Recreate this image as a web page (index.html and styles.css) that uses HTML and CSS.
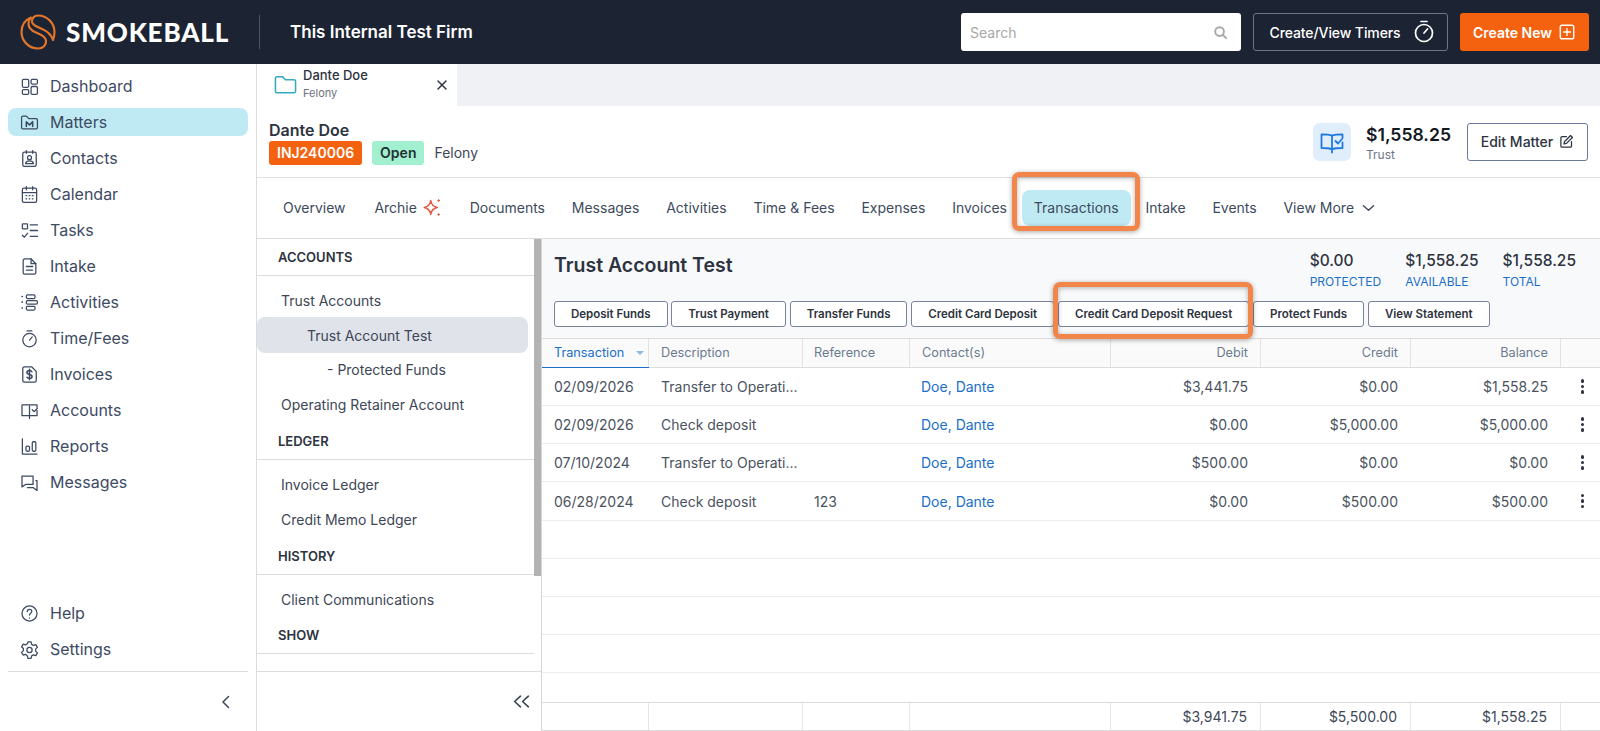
FILE: index.html
```html
<!DOCTYPE html>
<html lang="en">
<head>
<meta charset="utf-8">
<title>Smokeball</title>
<link rel="stylesheet" href="styles.css">
</head>
<body>
<div class="app">
  <header class="topbar">
    <div class="brand">
      <svg class="logo" viewBox="0 0 36 36" fill="none" stroke="#e2752a" stroke-width="2.200" stroke-linejoin="round" stroke-linecap="round">
        <path d="M11 3.500C5 6 1.500 11.500 1.500 18 1.500 27 9 34.500 18 34.500c5 0 8.500-3.500 8-8-.5-4-5-6-10-8-5-2-7.500-5.500-7.500-9 0-2.500 1-4.500 2.500-6z"/>
        <path d="M33 26c1-2.500 1.500-5 1.500-8C34.500 9 27 1.500 18 1.500c-4 0-6.500 3-6 6.500.5 3 4 4.500 9 6.500 6 2.500 10.500 6.500 12 11.500z"/>
      </svg>
      <span class="wordmark">SMOKEBALL</span>
    </div>
    <div class="firm">This Internal Test Firm</div>
    <div class="top-actions">
      <div class="search">
        <span>Search</span>
        <svg viewBox="0 0 24 24" fill="none" stroke="#a8a8a8" stroke-width="3" stroke-linecap="round"><circle cx="10.500" cy="10.500" r="7"/><path d="M16 16l5 5"/></svg>
      </div>
      <button class="btn-timer">Create/View Timers
        <svg viewBox="0 0 24 24" fill="none" stroke="#fff" stroke-width="1.700" stroke-linecap="round"><circle cx="12" cy="14" r="8.500"/><path d="M9 2.500h6M12 14l3.500-4"/></svg>
      </button>
      <button class="btn-create">Create New
        <svg viewBox="0 0 24 24" fill="none" stroke="#fff" stroke-width="1.800" stroke-linecap="round"><rect x="3" y="3" width="18" height="18" rx="2.500"/><path d="M12 7.500v9M7.500 12h9"/></svg>
      </button>
    </div>
  </header>

  <div class="body">
    <nav class="sidebar">
      <div class="nav-main">
        <a class="nav-item"><svg viewBox="0 0 24 24"><rect x="3" y="3" width="8" height="10" rx="1.500"/><rect x="14" y="3" width="8" height="6" rx="1.500"/><rect x="3" y="16" width="8" height="6" rx="1.500"/><rect x="14" y="12" width="8" height="10" rx="1.500"/></svg>Dashboard</a>
        <a class="nav-item active"><svg viewBox="0 0 24 24"><path d="M2 5.500A1.500 1.500 0 0 1 3.500 4H8l3 3h9.500A1.500 1.500 0 0 1 22 8.500v10a1.500 1.500 0 0 1-1.500 1.500h-17A1.500 1.500 0 0 1 2 18.500z"/><path class="thick" d="M8 17v-6l4 4 4-4v6"/></svg>Matters</a>
        <a class="nav-item"><svg viewBox="0 0 24 24"><rect x="3.500" y="4" width="17" height="18" rx="2"/><path d="M8 2v3.500M16 2v3.500"/><circle cx="12" cy="11" r="2.500"/><path d="M7 18.500c.5-2.500 2.500-3.500 5-3.500s4.500 1 5 3.500z"/></svg>Contacts</a>
        <a class="nav-item"><svg viewBox="0 0 24 24"><rect x="3" y="4" width="18" height="18" rx="2"/><path d="M3 9.500h18M8 2v4M16 2v4M7.500 13.500h1M11.500 13.500h1M15.500 13.500h1M7.500 17.500h1M11.500 17.500h1M15.500 17.500h1"/></svg>Calendar</a>
        <a class="nav-item"><svg viewBox="0 0 24 24"><rect x="3" y="3.500" width="6.500" height="6.500" rx="1"/><path d="M13 5h9M13 12h9M13 19.500h9M3 18l2.500 2.500L9.500 15.500"/></svg>Tasks</a>
        <a class="nav-item"><svg viewBox="0 0 24 24"><path d="M14 2.500H6a2 2 0 0 0-2 2v15a2 2 0 0 0 2 2h12a2 2 0 0 0 2-2V8.500z"/><path d="M14 2.500v6h6M8 12h8M8 16.500h8"/></svg>Intake</a>
        <a class="nav-item"><svg viewBox="0 0 24 24"><rect x="8" y="2.500" width="11" height="4.500" rx="1.500"/><rect x="8" y="9.500" width="14" height="4.500" rx="1.500"/><rect x="8" y="17" width="11" height="4.500" rx="1.500"/><path class="thick" d="M2.500 4.500h.5M2.500 11.500h.5M2.500 19h.5"/></svg>Activities</a>
        <a class="nav-item"><svg viewBox="0 0 24 24"><circle cx="12" cy="14" r="8.500"/><path d="M9 2.500h6M12 14l3.500-4"/></svg>Time/Fees</a>
        <a class="nav-item"><svg viewBox="0 0 24 24"><path d="M15 2.500H5.500a2 2 0 0 0-2 2v15a2 2 0 0 0 2 2h13a2 2 0 0 0 2-2V8z"/><path class="thick" d="M15 8.500c-.5-1-1.500-1.500-3-1.500-2 0-3.200 1-3.200 2.500 0 3.500 6.400 1.500 6.400 5 0 1.500-1.200 2.500-3.200 2.500-1.500 0-2.500-.5-3-1.500M12 5.500v13"/></svg>Invoices</a>
        <a class="nav-item"><svg viewBox="0 0 24 24"><path d="M12 6.500V22M12 5H2.500v13.500H12M12 5h9.500v3M12 18.500h9.500V12M15.500 11l2.500 2.500 4-4.500"/></svg>Accounts</a>
        <a class="nav-item"><svg viewBox="0 0 24 24"><path d="M3 2.500v19h18.500"/><rect x="7.500" y="11.500" width="4.500" height="6.500" rx="1.500"/><rect x="15.500" y="6" width="4.500" height="12" rx="1.500"/></svg>Reports</a>
        <a class="nav-item"><svg viewBox="0 0 24 24"><path d="M2.500 4h14v10.500H7l-4.500 3zM20 9.500h1.500V22l-4.500-3.500H9.500"/></svg>Messages</a>
      </div>
      <div class="nav-bottom">
        <a class="nav-item"><svg viewBox="0 0 24 24"><circle cx="12" cy="12" r="9.500"/><path d="M9.200 9.500c0-1.700 1.300-2.700 2.900-2.700s2.800 1 2.800 2.500c0 2.300-2.900 2.300-2.900 4.700M12 17.500v.2"/></svg>Help</a>
        <a class="nav-item"><svg viewBox="0 0 24 24"><path d="M10 2.500h4l.7 3 2.300 1.300 3-.9 2 3.400-2.300 2.200v2.600l2.300 2.200-2 3.400-3-.9-2.300 1.300-.7 3h-4l-.7-3L7 18.100l-3 .9-2-3.400 2.300-2.200v-2.600L2 8.600l2-3.400 3 .9 2.300-1.300z"/><circle cx="12" cy="12.500" r="3.300"/></svg>Settings</a>
      </div>
      <div class="nav-collapse">
        <svg viewBox="0 0 12 16"><path d="M8.500 2.500L3 8l5.500 5.500"/></svg>
      </div>
    </nav>

    <main class="content">
      <div class="tabstrip">
        <div class="matter-tab">
          <svg class="folder" viewBox="0 0 24 20" fill="none" stroke="#35a9bf" stroke-width="1.600" stroke-linejoin="round"><path d="M1.500 3a1.500 1.500 0 0 1 1.500-1.500h6l3 3h9a1.500 1.500 0 0 1 1.500 1.500v10.500A1.500 1.500 0 0 1 21 18H3a1.500 1.500 0 0 1-1.500-1.500z"/></svg>
          <div class="tab-text"><div class="tab-title">Dante Doe</div><div class="tab-sub">Felony</div></div>
          <svg class="tab-close" viewBox="0 0 12 12" stroke="#2d3340" stroke-width="1.500" stroke-linecap="round"><path d="M2 2l8 8M10 2l-8 8"/></svg>
        </div>
      </div>

      <section class="matter-head">
        <div class="matter-id">
          <div class="matter-name">Dante Doe</div>
          <div class="matter-tags"><span class="tag-no">INJ240006</span><span class="tag-open">Open</span><span class="tag-type">Felony</span></div>
        </div>
        <div class="trust-icon"><svg viewBox="0 0 24 24" fill="none" stroke="#1f7ae0" stroke-width="1.800" stroke-linecap="round" stroke-linejoin="round"><path d="M12 5.500C10 4.700 6 4.300 1.500 4.300V18c4.500 0 8.500.3 10.500 1.200v3.300M12 5.500v13.700M12 5.500c2-.8 6-1.200 10.500-1.200V8M12 19.200c2-.9 6-1.200 10.500-1.200v-5.500M15.500 11l2.500 2.500 4-4.500"/></svg></div>
        <div class="trust-sum"><div class="trust-amt">$1,558.25</div><div class="trust-lbl">Trust</div></div>
        <button class="btn-edit">Edit Matter
          <svg viewBox="0 0 24 24" fill="none" stroke="#2d3340" stroke-width="2" stroke-linecap="round" stroke-linejoin="round"><path d="M12 4H5a2 2 0 0 0-2 2v13a2 2 0 0 0 2 2h13a2 2 0 0 0 2-2v-7"/><path d="M18.500 2.500l3 3L12 15l-4 1 1-4z"/></svg>
        </button>
      </section>

      <nav class="tabs">
        <a class="tab">Overview</a>
        <a class="tab archie">Archie <svg class="spark" viewBox="0 0 24 24" fill="none" stroke="#e2573f" stroke-width="1.700" stroke-linejoin="round"><path d="M10 4c.6 4.500 3 7 7.500 8-4.500 1-6.900 3.500-7.500 8-.6-4.500-3-7-7.500-8 4.500-1 6.900-3.500 7.500-8z"/><path d="M19 2.500v3M17.500 4h3M19 18.500v3M17.500 20h3" stroke-width="1.300"/></svg></a>
        <a class="tab">Documents</a>
        <a class="tab">Messages</a>
        <a class="tab">Activities</a>
        <a class="tab">Time &amp; Fees</a>
        <a class="tab">Expenses</a>
        <a class="tab">Invoices</a>
        <a class="tab current">Transactions</a>
        <a class="tab">Intake</a>
        <a class="tab">Events</a>
        <a class="tab">View More <svg class="chev" viewBox="0 0 14 8" fill="none" stroke="#3d4656" stroke-width="1.500" stroke-linecap="round" stroke-linejoin="round"><path d="M1.500 1.500L7 6.500l5.500-5"/></svg></a>
      </nav>

      <div class="workspace">
        <aside class="panel">
          <div class="panel-scroll">
            <div class="panel-list">
              <div class="sec-head">ACCOUNTS</div>
              <div class="sec-items spaced">
                <a class="sec-item">Trust Accounts</a>
                <a class="sec-item lvl2 selected">Trust Account Test</a>
                <a class="sec-item lvl3">- Protected Funds</a>
                <a class="sec-item">Operating Retainer Account</a>
              </div>
              <div class="sec-head">LEDGER</div>
              <div class="sec-items spaced">
                <a class="sec-item">Invoice Ledger</a>
                <a class="sec-item">Credit Memo Ledger</a>
              </div>
              <div class="sec-head">HISTORY</div>
              <div class="sec-items">
                <a class="sec-item">Client Communications</a>
              </div>
              <div class="sec-head">SHOW</div>
            </div>
            <div class="scrollbar"><div class="thumb"></div></div>
          </div>
          <div class="panel-foot">
            <svg viewBox="0 0 18 14" fill="none" stroke="#3d4656" stroke-width="1.600" stroke-linecap="round" stroke-linejoin="round"><path d="M8 2L2.500 7 8 12M15.500 2L10 7l5.500 5"/></svg>
          </div>
        </aside>

        <section class="ledger">
          <div class="ledger-head">
            <div class="ledger-top">
              <h1 class="ledger-title">Trust Account Test</h1>
              <div class="stats">
                <div class="stat"><b>$0.00</b><span>PROTECTED</span></div>
                <div class="stat"><b>$1,558.25</b><span>AVAILABLE</span></div>
                <div class="stat"><b>$1,558.25</b><span>TOTAL</span></div>
              </div>
            </div>
            <div class="actions">
              <button class="act">Deposit Funds</button>
              <button class="act">Trust Payment</button>
              <button class="act">Transfer Funds</button>
              <button class="act">Credit Card Deposit</button>
              <button class="act">Credit Card Deposit Request</button>
              <button class="act">Protect Funds</button>
              <button class="act">View Statement</button>
            </div>
          </div>

          <div class="grid-row thead">
            <div class="cell sorted">Transaction<i class="caret"></i></div>
            <div class="cell">Description</div>
            <div class="cell">Reference</div>
            <div class="cell">Contact(s)</div>
            <div class="cell num">Debit</div>
            <div class="cell num">Credit</div>
            <div class="cell num">Balance</div>
            <div class="cell"></div>
          </div>

          <div class="grid-row tr">
            <div class="cell">02/09/2026</div><div class="cell">Transfer to Operati...</div><div class="cell"></div><div class="cell link">Doe, Dante</div><div class="cell num">$3,441.75</div><div class="cell num">$0.00</div><div class="cell num">$1,558.25</div><div class="cell kebab"><i></i><i></i><i></i></div>
          </div>
          <div class="grid-row tr">
            <div class="cell">02/09/2026</div><div class="cell">Check deposit</div><div class="cell"></div><div class="cell link">Doe, Dante</div><div class="cell num">$0.00</div><div class="cell num">$5,000.00</div><div class="cell num">$5,000.00</div><div class="cell kebab"><i></i><i></i><i></i></div>
          </div>
          <div class="grid-row tr">
            <div class="cell">07/10/2024</div><div class="cell">Transfer to Operati...</div><div class="cell"></div><div class="cell link">Doe, Dante</div><div class="cell num">$500.00</div><div class="cell num">$0.00</div><div class="cell num">$0.00</div><div class="cell kebab"><i></i><i></i><i></i></div>
          </div>
          <div class="grid-row tr tall">
            <div class="cell">06/28/2024</div><div class="cell">Check deposit</div><div class="cell">123</div><div class="cell link">Doe, Dante</div><div class="cell num">$0.00</div><div class="cell num">$500.00</div><div class="cell num">$500.00</div><div class="cell kebab"><i></i><i></i><i></i></div>
          </div>
          <div class="tr-empty"></div>
          <div class="tr-empty"></div>
          <div class="tr-empty"></div>
          <div class="tr-empty"></div>
          <div class="spacer"></div>
          <div class="grid-row tfoot">
            <div class="cell"></div><div class="cell"></div><div class="cell"></div><div class="cell"></div><div class="cell num">$3,941.75</div><div class="cell num">$5,500.00</div><div class="cell num">$1,558.25</div><div class="cell"></div>
          </div>
        </section>
      </div>
    </main>
  </div>

  <div class="callout callout-tab"></div>
  <div class="callout callout-btn"></div>
</div>
</body>
</html>
```
FILE: styles.css
```css
* { box-sizing: border-box; }
html, body { margin: 0; height: 100%; }
body { font-family: Inter, "Liberation Sans", sans-serif; color: #3d4656; background: #fff; overflow: hidden; }
.app { position: relative; width: 1600px; height: 731px; display: flex; flex-direction: column; overflow: hidden; }
button { font-family: inherit; cursor: pointer; }

/* top bar */
.topbar { height: 64px; flex: none; background: #1c2333; display: flex; align-items: center; color: #fff; }
.brand { width: 260px; height: 34px; padding-left: 20px; display: flex; align-items: center; gap: 10px; border-right: 1px solid #4a5670; }
.logo { width: 36px; height: 36px; flex: none; }
.wordmark { font-family: Lato, sans-serif; font-weight: 900; font-size: 26px; letter-spacing: 0.85px; }
.firm { margin-left: 30px; font-size: 17px; font-weight: 600; }
.top-actions { margin-left: auto; margin-right: 11px; display: flex; gap: 12px; align-items: center; }
.search { width: 280px; height: 38px; background: #fff; border-radius: 3px; display: flex; align-items: center; justify-content: space-between; padding: 0 13px 0 9px; color: #a8a8a8; font-size: 14px; }
.search svg { width: 15px; height: 15px; }
.btn-timer { width: 195px; height: 38px; padding: 0 0 0 4px; background: transparent; border: 1px solid #6b7688; border-radius: 3px; color: #fff; font-size: 14px; font-weight: 500; letter-spacing: -0.1px; display: flex; align-items: center; justify-content: center; gap: 11px; }
.btn-timer svg { width: 24px; height: 24px; margin-top: -3px; }
.btn-create { width: 129px; height: 38px; background: #f4620f; border: 0; border-radius: 3px; color: #fff; font-size: 14px; font-weight: 600; display: flex; align-items: center; justify-content: center; gap: 6px; }
.btn-create svg { width: 18px; height: 18px; }

.body { flex: 1; display: flex; min-height: 0; }

/* sidebar */
.sidebar { width: 257px; flex: none; border-right: 1px solid #dcdcdc; display: flex; flex-direction: column; padding: 8px 8px 0; }
.nav-main { display: flex; flex-direction: column; gap: 8px; }
.nav-item { height: 28px; display: flex; align-items: center; gap: 11px; padding-left: 12px; border-radius: 8px; font-size: 16px; color: #3d4a63; }
.nav-item svg { width: 19px; height: 19px; flex: none; fill: none; stroke: #3d4a63; stroke-width: 1.600; stroke-linecap: round; stroke-linejoin: round; }
.nav-item svg .thick { stroke-width: 2; }
.nav-item.active { background: #bfeaf3; }
.nav-bottom { margin-top: auto; display: flex; flex-direction: column; gap: 8px; padding-bottom: 8px; border-bottom: 1px solid #dcdcdc; }
.nav-collapse { height: 59px; flex: none; display: flex; align-items: center; justify-content: flex-end; padding-right: 16px; }
.nav-collapse svg { width: 12px; height: 16px; fill: none; stroke: #3d4656; stroke-width: 1.500; stroke-linecap: round; stroke-linejoin: round; }

/* content */
.content { flex: 1; min-width: 0; display: flex; flex-direction: column; }
.tabstrip { height: 42px; flex: none; background: #eff1f5; display: flex; }
.matter-tab { width: 200px; background: #fff; display: flex; align-items: center; padding: 0 9px 2px 17px; }
.folder { width: 23px; height: 20px; flex: none; margin-top: 2px; }
.tab-text { margin-left: 6px; flex: 1; }
.tab-title { font-size: 13px; font-weight: 500; color: #2d3340; line-height: 17px; }
.tab-sub { font-size: 11px; color: #6b7280; line-height: 16px; margin-top: 1px; }
.tab-close { width: 12px; height: 12px; flex: none; margin-top: 2px; }

.matter-head { height: 72px; flex: none; border-bottom: 1px solid #e0e0e0; display: flex; align-items: center; padding: 0 12px; }
.matter-id { flex: 1; padding-top: 1px; }
.matter-name { font-size: 16px; font-weight: 600; color: #2d3340; line-height: 20px; }
.matter-tags { display: flex; align-items: center; margin-top: 1px; }
.tag-no { height: 24px; padding: 0 8px; background: #f4620f; color: #fff; font-size: 14px; font-weight: 600; border-radius: 3px; display: flex; align-items: center; }
.tag-open { margin-left: 10px; height: 24px; padding: 0 8px; background: #a2f0d0; color: #233; font-size: 14px; font-weight: 600; border-radius: 3px; display: flex; align-items: center; }
.tag-type { margin-left: 10px; font-size: 14px; color: #3d4656; }
.trust-icon { width: 38px; height: 38px; background: #e0edfb; border-radius: 7px; display: flex; align-items: center; justify-content: center; }
.trust-icon svg { width: 24px; height: 24px; }
.trust-sum { margin-left: 15px; width: 101px; padding-top: 4px; }
.trust-amt { font-size: 17.600px; font-weight: 600; color: #14181f; line-height: 22px; }
.trust-lbl { font-size: 12px; color: #6b7488; line-height: 16px; margin-top: 1px; }
.btn-edit { width: 121px; height: 38px; background: #fff; border: 1px solid #6b7a9a; border-radius: 3px; color: #2d3340; font-size: 14px; font-weight: 500; display: flex; align-items: center; justify-content: center; gap: 6px; }
.btn-edit svg { width: 15px; height: 15px; }

.tabs { height: 61px; flex: none; border-bottom: 1px solid #dcdcdc; display: flex; align-items: center; padding: 0 0 0 14px; gap: 2.800px; }
.tab { height: 36px; padding: 0 12px 1px; border-radius: 8px; font-size: 14px; color: #3d4a5c; display: flex; align-items: center; gap: 4px; white-space: nowrap; }
.tab.current { background: #bfeaf3; }
.archie { margin-left: 2px; gap: 5px; }
.spark { width: 21px; height: 21px; }
.chev { width: 13px; height: 8px; margin-left: 4px; }

.workspace { flex: 1; min-height: 0; display: flex; }

/* left panel */
.panel { width: 285px; flex: none; border-right: 1px solid #d6d6d6; display: flex; flex-direction: column; }
.panel-scroll { height: 433px; flex: none; border-bottom: 1px solid #dcdcdc; display: flex; }
.panel-list { width: 277px; flex: none; }
.scrollbar { width: 7px; flex: none; }
.thumb { height: 337px; background: #b3b3b3; }
.sec-head { height: 37px; padding-left: 21px; border-bottom: 1px solid #dcdcdc; display: flex; align-items: center; font-size: 13px; font-weight: 600; color: #2d3340; }
.sec-items { padding-top: 7px; }
.sec-items.spaced { padding-bottom: 1px; }
.sec-item { height: 35px; display: flex; align-items: center; padding-left: 24px; font-size: 14px; color: #3d4656; margin-right: 6px; border-radius: 8px; }
.lvl2 { padding-left: 50px; }
.lvl3 { padding-left: 70px; }
.selected { background: #e0e3ea; height: 36px; margin-top: -1px; margin-bottom: -1px; }
.panel-foot { flex: 1; display: flex; align-items: center; justify-content: flex-end; padding-right: 10px; }
.panel-foot svg { width: 19px; height: 15px; }

/* ledger */
.ledger { flex: 1; min-width: 0; display: flex; flex-direction: column; }
.ledger-head { height: 99px; flex: none; background: #f8f9fb; padding: 0 12px; display: flex; flex-direction: column; }
.ledger-top { height: 62px; display: flex; justify-content: space-between; }
.ledger-title { margin: 14px 0 0; font-size: 19.500px; font-weight: 600; color: #2d3340; line-height: 24px; }
.stats { display: flex; gap: 24px; padding: 12px 12px 0 0; }
.stat { display: flex; flex-direction: column; }
.stat b { font-size: 15.500px; font-weight: 500; color: #2d3340; line-height: 20px; }
.stat span { font-size: 12px; color: #1a6fc9; line-height: 20px; margin-top: 1px; }
.actions { display: flex; gap: 3.800px; }
.act { height: 26px; padding: 0 16px; background: #fff; border: 1px solid #77839c; border-radius: 3px; font-size: 11.500px; font-weight: 600; color: #2d3340; white-space: nowrap; }

.grid-row { display: grid; grid-template-columns: 107px 154px 107px 201px 150px 150px 150px 1fr; flex: none; }
.cell { display: flex; align-items: center; padding: 0 12px; min-width: 0; white-space: nowrap; font-size: 14px; color: #4a5260; }
.cell:nth-child(3) { padding-left: 11px; }
.num { justify-content: flex-end; padding-right: 13px; }
.link { color: #1a6fc9; padding-left: 11px; }
.thead { height: 30px; border-top: 1px solid #dcdcdc; border-bottom: 1px solid #dcdcdc; background: #fafafa; }
.thead .cell { font-size: 12.700px; color: #6b7a90; border-right: 1px solid #e2e2e2; padding-bottom: 1px; }
.thead .num { padding-right: 12px; }
.thead .cell:last-child { border-right: 0; }
.thead .sorted { color: #1a6fc9; box-shadow: 0 1px 0 #1a6fc9; justify-content: space-between; }
.caret { width: 0; height: 0; border-left: 4px solid transparent; border-right: 4px solid transparent; border-top: 4px solid #8ab8e8; margin-right: -8px; }
.tr { height: 38px; border-bottom: 1px solid #ececec; }
.tr.tall { height: 39px; }
.tr .cell:first-child { padding-right: 0; }
.tr-empty { height: 38px; flex: none; border-bottom: 1px solid #ececec; }
.spacer { flex: 1; }
.kebab { flex-direction: column; justify-content: center; gap: 2px; padding: 0 0 0 4px; }
.kebab i { width: 3.500px; height: 3.500px; background: #2d3340; border-radius: 50%; }
.tfoot { height: 29px; border-top: 1px solid #dcdcdc; border-bottom: 1px solid #dcdcdc; }
.tfoot .cell { border-right: 1px solid #e6e6e6; color: #3d4656; }
.tfoot .cell:last-child { border-right: 0; }

/* annotation rectangles */
.callout { position: absolute; border: 5px solid #f2864a; border-radius: 7px; box-shadow: 0 1px 5px rgba(0,0,0,.35), inset 0 1px 5px rgba(0,0,0,.3); pointer-events: none; }
.callout-tab { left: 1012px; top: 172px; width: 128px; height: 59px; }
.callout-btn { left: 1053px; top: 282px; width: 200px; height: 57px; }
```
